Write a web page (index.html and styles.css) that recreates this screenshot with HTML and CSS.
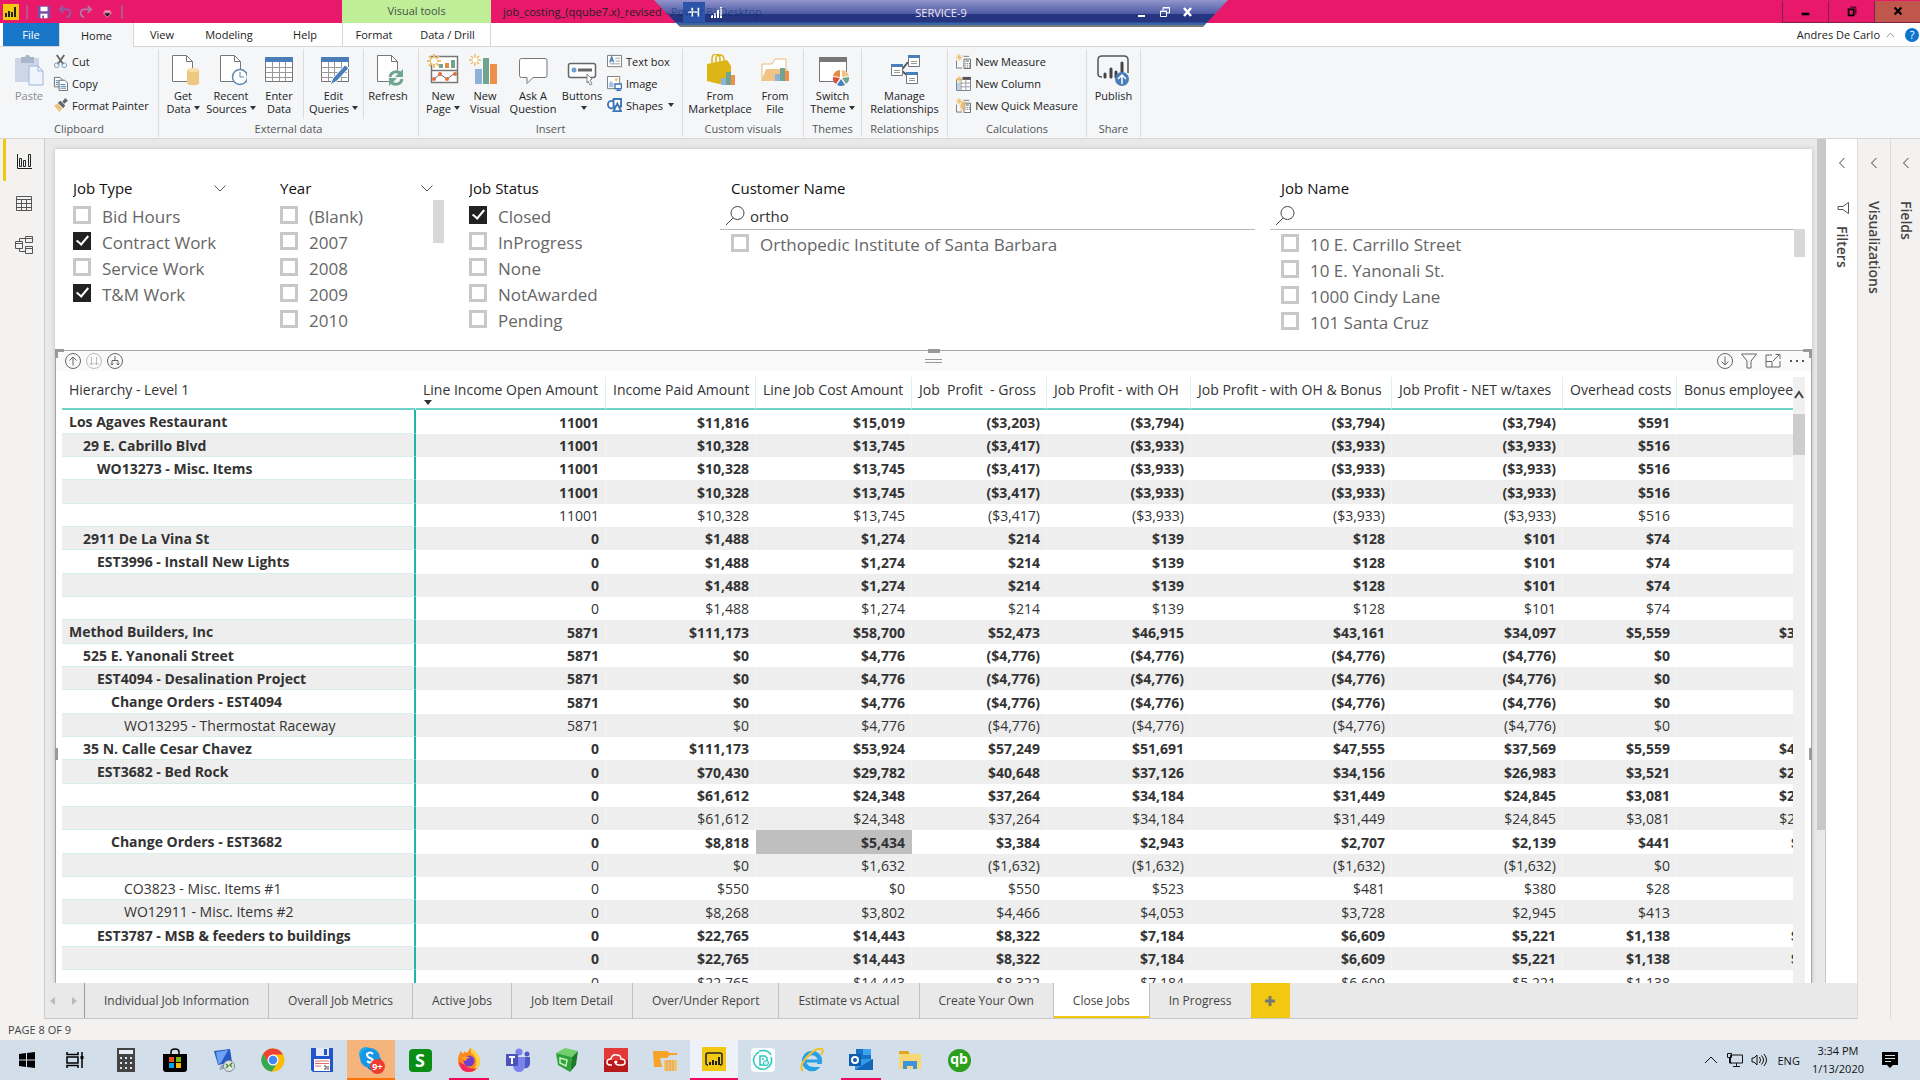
FILE: index.html
```html
<!DOCTYPE html>
<html lang="en">
<head>
<meta charset="utf-8">
<title>job_costing_(qqube7.x)_revised - Power BI Desktop</title>
<link rel="stylesheet" href="styles.css">
</head>
<body>
<div class="app">

<header class="titlebar">
  <svg class="logo" viewBox="0 0 16 16"><rect width="16" height="16" fill="#f2c811"/><path d="M3 9v4M6 7v6M9 8v5M12 3v10" stroke="#222" stroke-width="2"/></svg>
  <span class="divider"></span>
  <button class="quick" aria-label="Save"><svg viewBox="0 0 16 16"><path d="M1 1h14v14H1z" fill="#7d4ea8"/><path d="M4 2h8v5H4zM4 10h8v5H4z" fill="#fff"/><path d="M6 12h2v3H6z" fill="#7d4ea8"/></svg></button>
  <button class="quick" aria-label="Undo"><svg viewBox="0 0 16 16" fill="none" stroke="#8a62a8" stroke-width="2"><path d="M6 1 2 5l4 4M2 5h8c6 0 5 8 0 9"/></svg></button>
  <button class="quick" aria-label="Redo"><svg viewBox="0 0 16 16" fill="none" stroke="#b07aa6" stroke-width="2"><path d="m10 1 4 4-4 4M14 5H6c-6 0-5 8 0 9"/></svg></button>
  <button class="quick" aria-label="Customize"><svg viewBox="0 0 16 16"><path d="M5 7h7" stroke="#fff"/><path d="M4 9h9l-4.500 5z" fill="#111" stroke="#fff" stroke-width=".7"/></svg></button>
  <span class="divider"></span>
  <span class="context">Visual tools</span>
  <h1 class="filename">job_costing_(qqube7.x)_revised <span>- Power BI Desktop</span></h1>
  <div class="window-buttons">
    <button aria-label="Minimize"><svg viewBox="0 0 14 14"><path d="M2 9h9v3H2z"/></svg></button>
    <button aria-label="Restore"><svg viewBox="0 0 14 14" fill="none" stroke="#000"><path d="M3 5h6v7H3z" stroke-width="2"/><path d="M5 2.500h6.500V11"/></svg></button>
    <button class="close" aria-label="Close"><svg viewBox="0 0 14 14" stroke="#000" stroke-width="2.500"><path d="m3 3 8 8M11 3l-8 8"/></svg></button>
  </div>
  <div class="remote">
    <span class="pin"><svg viewBox="0 0 16 16" stroke="#fff" fill="none" stroke-width="2"><path d="M1 8h5M6 3v10M6 8h7M13 3v10"/></svg></span>
    <svg class="signal" viewBox="0 0 14 14" fill="#fff"><path d="M1 10h2v3H1zM4 8h2v5H4zM7 5h2v8H7zM10 2h2v11h-2z"/></svg>
    <span class="host">SERVICE-9</span>
    <svg class="remote-icon" viewBox="0 0 12 12"><path d="M2 9h7v2H2z" fill="#fff"/></svg>
    <svg class="remote-icon" viewBox="0 0 12 12" fill="none" stroke="#fff"><path d="M1.500 5h6v5.500h-6zM1 5.500h7M4 4V1.500h6.500V7H8M4 2h7"/></svg>
    <svg class="remote-icon" viewBox="0 0 12 12" stroke="#fff" stroke-width="2.500"><path d="m2 2 7 8M9 2l-7 8"/></svg>
  </div>
</header>

<nav class="menu">
  <button class="file">File</button>
  <button class="m-home active">Home</button>
  <button class="m-view">View</button>
  <button class="m-model">Modeling</button>
  <button class="m-help">Help</button>
  <div class="context-tabs"><button>Format</button><button>Data / Drill</button></div>
  <div class="account"><span>Andres De Carlo</span>
    <svg width="9" height="6" viewBox="0 0 9 6" fill="none" stroke="#999"><path d="m1 5 3.500-4L8 5"/></svg>
    <button class="help" aria-label="Help">?</button></div>
</nav>

<section class="ribbon">
  <div class="group g-clip"><div class="tools">
    <button class="big b-paste dim"><svg viewBox="0 0 32 32"><path d="M2 4h24v24H2z" fill="#cdd6e6"/><path d="M8 3h4l1-2h3l1 2h4v6H8z" fill="#a9b5c9"/><path d="M16 12h9l5 5v14H16z" fill="#eef4fb" stroke="#9fb4d3"/><path d="M25 12v5h5" fill="none" stroke="#9fb4d3"/></svg><span>Paste</span></button>
    <div class="stack">
      <button><svg viewBox="0 0 16 16" fill="none"><path d="m4 1 7 10M12 1 5 11" stroke="#666" stroke-width="2"/><circle cx="4" cy="12" r="2.500" stroke="#7097c4"/><circle cx="12" cy="12" r="2.500" stroke="#7097c4"/></svg>Cut</button>
      <button><svg viewBox="0 0 16 16" fill="#fff" stroke="#666"><path d="M1.500 1.500h6l2 2v8h-8z"/><path d="M6.500 4.500h6l3 3v8h-9z"/><path d="M3 5h3M3 7h3M3 9h3M8 9h5M8 11h6M8 13h6" stroke="#4a7ebb"/></svg>Copy</button>
      <button><svg viewBox="0 0 16 16"><path d="m1 8 4-2 5 5-3 4z" fill="#ecc27a"/><path d="m5 5 3-2 5 5-2 3zM10 4l3-4 3 3-4 3z" fill="#666"/></svg>Format Painter</button>
    </div>
  </div><h2>Clipboard</h2></div>

  <div class="group g-ext"><div class="tools">
    <button class="big b-a"><svg viewBox="0 0 32 32"><path d="M5.500 1.500h14l6 6v20h-20z" fill="#fff" stroke="#777"/><path d="M19.500 1.500v6h6" fill="none" stroke="#777"/><path d="M20 16v13c0 3 12 3 12 0V16z" fill="#eec781"/><ellipse cx="26" cy="16" rx="6" ry="2" fill="#f7dda8"/></svg><span>Get</span><span>Data<i></i></span></button>
    <button class="big b-a"><svg viewBox="0 0 32 32"><path d="M5.500 1.500h14l6 6v20h-20z" fill="#fff" stroke="#777"/><path d="M19.500 1.500v6h6" fill="none" stroke="#777"/><circle cx="25" cy="23" r="7.500" fill="#fff" stroke="#5b87b8" stroke-width="1.500"/><path d="M25 18v5h4" fill="none" stroke="#5b87b8"/></svg><span>Recent</span><span>Sources<i></i></span></button>
    <button class="big b-a"><svg viewBox="0 0 32 32"><path d="M2.500 3.500h27v24h-27z" fill="#fff" stroke="#777"/><path d="M2 3h28v5H2z" fill="#4a7ebb"/><path d="M3 13.500h26M3 18.500h26M3 23.500h26M9.500 8v19M16.500 8v19M22.500 8v19" stroke="#999"/></svg><span>Enter</span><span>Data</span></button>
    <button class="big b-edit lined"><svg viewBox="0 0 32 32"><path d="M3.500 3.500h27v24h-27z" fill="#fff" stroke="#777"/><path d="M3 3h28v5H3z" fill="#4a7ebb"/><path d="M3 13.500h26M3 18.500h26M3 23.500h26M10.500 8v19M16.500 8v19M23.500 8v19" stroke="#999"/><path d="m12 31 3-7L27 11l4 3-12 13z" fill="#4a7ebb" stroke="#fff"/></svg><span>Edit</span><span>Queries<i></i></span></button>
    <button class="big b-a"><svg viewBox="0 0 32 32"><path d="M5.500 1.500h14l6 6v20h-20z" fill="#fff" stroke="#777"/><path d="M19.500 1.500v6h6" fill="none" stroke="#777"/><circle cx="24" cy="24" r="8" fill="#f4f6f8"/><path d="M18 23c1-6 9-7 11-2M30 25c-1 6-9 7-11 2" fill="none" stroke="#6fa58f" stroke-width="3"/><path d="M31 15v8h-8zM17 32v-8h8z" fill="#6fa58f"/></svg><span>Refresh</span></button>
  </div><h2>External data</h2></div>

  <div class="group g-insert"><div class="tools">
    <button class="big b-c"><svg viewBox="0 0 32 32"><path d="M4.500 2.500h26v26h-26zM4 16.500h26" fill="#fff" stroke="#777" stroke-width="1.500"/><path d="M12 10h4v4h-4zM24 6h4v8h-4z" fill="#6fa58f"/><path d="M18 9h4v5h-4z" fill="#e58a43"/><path d="m7 25 6-5 7 5 8-6" fill="none" stroke="#666"/><g fill="#e0703c"><circle cx="7" cy="25" r="2"/><circle cx="13" cy="20" r="2"/><circle cx="20" cy="25" r="2"/><circle cx="28" cy="20" r="2"/></g><path d="M7 0v14M0 7h14M2 2l10 10M12 2 2 12" stroke="#efbd6b" stroke-width="2"/><circle cx="7" cy="7" r="3" fill="#fff"/></svg><span>New</span><span>Page<i></i></span></button>
    <button class="big b-c"><svg viewBox="0 0 32 32"><path d="M6 15h7v15H6z" fill="#8fb0d9"/><path d="M14 4h6v26h-6z" fill="#6fa58f"/><path d="M21 10h7v20h-7z" fill="#ee8f4b"/><path d="M6 0v12M0 6h12M2 2l8 8M10 2l-8 8" stroke="#efbd6b" stroke-width="1.500"/><circle cx="6" cy="6" r="2.500" fill="#fff"/></svg><span>New</span><span>Visual</span></button>
    <button class="big b-ask"><svg viewBox="0 0 32 32"><path d="M5 4.500h23q2 0 2 2v15q0 2-2 2H16l-6 6v-6H4.500q-2 0-2-2v-15q0-2 2-2z" fill="#fff" stroke="#777"/></svg><span>Ask A</span><span>Question</span></button>
    <button class="big b-btn"><svg viewBox="0 0 32 32"><rect x="2.500" y="9.500" width="27" height="14" rx="2" fill="#fff" stroke="#666" stroke-width="1.500"/><circle cx="8" cy="16" r="2.500" fill="#6fa0d4"/><path d="M12 16h14" stroke="#666" stroke-width="3"/><path d="m21 20 5 5-2 1 2 4-2 1-2-4-1 2z" fill="#fff" stroke="#888"/></svg><span>Buttons</span><span><i></i></span></button>
    <div class="stack">
      <button><svg viewBox="0 0 16 16"><path d="M.5 1.500h15v12H.5z" fill="#fff" stroke="#777"/><path d="m3 9 2-6 2 6M3.500 7h3" fill="none" stroke="#4a7ebb" stroke-width="1.500"/><path d="M9 4.500h5M9 7.500h5M3 10.500h11" stroke="#999"/></svg>Text box</button>
      <button><svg viewBox="0 0 16 16"><path d="M.5.5h13v13H.5z" fill="#fff" stroke="#777"/><circle cx="10" cy="4" r="1.500" fill="#eebf72"/><path d="M2 12V8l2-3 3 3v4z" fill="#a7c2e2"/><path d="M8.500 8.500h7v5h-7zM12 13v2M10 15.500h5" fill="#fff" stroke="#3d75b5" stroke-width="1.500"/></svg>Image</button>
      <button><svg viewBox="0 0 16 16" fill="#fff" stroke="#3d75b5" stroke-width="2"><circle cx="5" cy="7" r="4"/><path d="M7 1h8v8H7z"/><path d="m11 6 4 8H7z"/></svg>Shapes<i></i></button>
    </div>
  </div><h2>Insert</h2></div>

  <div class="group g-custom"><div class="tools">
    <button class="big b-market"><svg viewBox="0 0 32 32"><path d="M8 9V5q0-5 4-5t4 5v3M12 9V4q0-3 4-3t4 5v2" fill="none" stroke="#dcb414" stroke-width="1.500"/><path d="m3 10 20-4 4 6v17l-12 1-12-3z" fill="#dcb414"/><path d="M17 24h5v7h-5z" fill="#8fb0d9"/><path d="M22 18h5v13h-5z" fill="#6fa58f"/><path d="M27 21h4v10h-4z" fill="#ee8f4b"/></svg><span>From</span><span>Marketplace</span></button>
    <button class="big b-c"><svg viewBox="0 0 32 32"><path d="M3 26V10h10l3-5h11v12z" fill="#fff" stroke="#e8bd80"/><path d="m2 27 5-12h22l-6 12z" fill="#efc487"/><path d="M16 20h5v7h-5z" fill="#8fb0d9"/><path d="M21 14h5v13h-5z" fill="#6fa58f"/><path d="M26 17h4v10h-4z" fill="#ee8f4b"/></svg><span>From</span><span>File</span></button>
  </div><h2>Custom visuals</h2></div>

  <div class="group g-theme"><div class="tools">
    <button class="big"><svg viewBox="0 0 32 32"><path d="M2.500 3.500h27v24h-27z" fill="#fff" stroke="#777"/><path d="M2 3h28v5H2z" fill="#777"/><circle cx="24" cy="24" r="8" fill="#fff"/><path d="M23 23V16a8 8 0 0 0-7 6z" fill="#e58a43"/><path d="M25 23V16a8 8 0 0 1 7 6z" fill="#efc487"/><path d="m25 24 7-1q1 4-3 7z" fill="#6fa58f"/><path d="m24 25 4 6q-4 2-8 0z" fill="#4a7ebb"/><path d="m23 24-4 6q-4-3-3-7z" fill="#d3513f"/></svg><span>Switch</span><span>Theme<i></i></span></button>
  </div><h2>Themes</h2></div>

  <div class="group g-rel"><div class="tools">
    <button class="big"><svg viewBox="0 0 32 32"><path d="m11 18 8-10M13 17l6 5" stroke="#555" stroke-width="2"/><path d="M19.500 1.500h11v11h-11zM2.500 10.500h11v11h-11zM17.500 18.500h11v11h-11z" fill="#fff" stroke="#777"/><path d="M19 1h12v3H19zM2 10h12v3H2zM17 18h12v3H17z" fill="#4a7ebb"/><path d="M22 7.500h6M22 9.500h6M5 16.500h6M5 18.500h6M20 24.500h6M20 26.500h6" stroke="#999"/></svg><span>Manage</span><span>Relationships</span></button>
  </div><h2>Relationships</h2></div>

  <div class="group g-calc"><div class="tools">
    <div class="stack">
      <button><svg viewBox="0 0 16 16"><path d="M.5 7v8h6M8 2.500h6" fill="none" stroke="#777"/><path d="M8.500 5.500h7v10h-7z" fill="#fff" stroke="#666"/><path d="M10 7.500h4M10 10h1m1 0h1m1 0h1M10 12h1m1 0h1m1 0h1M10 14h1m1 0h1m1 0h1" stroke="#555"/><path d="M3.500 0v7M0 3.500h7M1 1l5 5M6 1 1 6" stroke="#efbd6b"/></svg>New Measure</button>
      <button><svg viewBox="0 0 16 16"><path d="M.5 3.500h15v12H.5z" fill="#fff" stroke="#777"/><path d="M1 7h4v8H1z" fill="#b8d0ea"/><path d="M7 1h9v3H7z" fill="#555"/><path d="M5.500 4v11M10.500 4v11M5 7.500h10M5 11.500h10" stroke="#999"/><path d="M3.500 0v7M0 3.500h7M1 1l5 5M6 1 1 6" stroke="#efbd6b"/></svg>New Column</button>
      <button><svg viewBox="0 0 16 16"><path d="M.5 7v8h6M8 2.500h6" fill="none" stroke="#777"/><path d="M8.500 5.500h7v10h-7z" fill="#fff" stroke="#666"/><path d="M10 7.500h4M10 10h1m1 0h1m1 0h1M10 12h1m1 0h1m1 0h1" stroke="#555"/><path d="M3.500 0v7M0 3.500h7M1 1l5 5M6 1 1 6" stroke="#efbd6b"/><path d="M6 4h4L8 8h2l-6 8 2-6H4z" fill="#efbd6b"/></svg>New Quick Measure</button>
    </div>
  </div><h2>Calculations</h2></div>

  <div class="group g-share"><div class="tools">
    <button class="big"><svg viewBox="0 0 32 32"><path d="M5 23q-4 0-4-3V6q0-4 4-4h22q4 0 4 4v13" fill="none" stroke="#555" stroke-width="1.500"/><path d="M8 20v3M14 15v8M19 18v5M25 9v14" stroke="#444" stroke-width="3" stroke-linecap="round"/><circle cx="25" cy="25" r="7" fill="#4a7ebb"/><path d="m21 25 4-4 4 4M25 21v9" fill="none" stroke="#fff" stroke-width="1.500"/></svg><span>Publish</span></button>
  </div><h2>Share</h2></div>
</section>

<main class="workspace">
  <nav class="rail">
    <button class="active" aria-label="Report"><svg viewBox="0 0 18 18" fill="none" stroke="#222"><path d="M1.500 2v14.500H16M3.500 6.500h2v8h-2zM7.500 8.500h2v6h-2zM12.500 2.500h2v12h-2z"/></svg></button>
    <button aria-label="Data"><svg viewBox="0 0 18 18" fill="none" stroke="#555"><path d="M1.500 2.500h15v14h-15zM1 5.500h15M1 9.500h15M1 13.500h15M6.500 5v11M11.500 5v11" /></svg></button>
    <button aria-label="Model"><svg viewBox="0 0 18 18" fill="none" stroke="#555"><path d="M.5 5.500h7v7h-7zM.5 7.500h7M10.500.5h7v6h-7zM10.500 2.500h7M10.500 10.500h7v7h-7zM10.500 12.500h7M4.500 5V2.500h6M4.500 13v2.500h6"/></svg></button>
  </nav>

  <div class="center">
    <div class="stage">
      <div class="canvas">
        <div class="page">
          <div class="slicers">
            <section class="slicer">
              <h3>Job Type <svg viewBox="0 0 12 7"><path d="m.5.5 5.500 5.500L11.500.5"/></svg></h3>
              <label><input type="checkbox">Bid Hours</label>
              <label><input type="checkbox" checked>Contract Work</label>
              <label><input type="checkbox">Service Work</label>
              <label><input type="checkbox" checked>T&amp;M Work</label>
            </section>
            <section class="slicer year">
              <h3>Year <svg viewBox="0 0 12 7"><path d="m.5.5 5.500 5.500L11.500.5"/></svg></h3>
              <label><input type="checkbox">(Blank)</label>
              <label><input type="checkbox">2007</label>
              <label><input type="checkbox">2008</label>
              <label><input type="checkbox">2009</label>
              <label><input type="checkbox">2010</label>
              <span class="thumb"></span>
            </section>
            <section class="slicer">
              <h3>Job Status</h3>
              <label><input type="checkbox" checked>Closed</label>
              <label><input type="checkbox">InProgress</label>
              <label><input type="checkbox">None</label>
              <label><input type="checkbox">NotAwarded</label>
              <label><input type="checkbox">Pending</label>
            </section>
            <section class="slicer customer">
              <h3>Customer Name</h3>
              <div class="search"><svg viewBox="0 0 20 20"><circle cx="12.500" cy="7" r="6.500"/><path d="m8 12-7 7"/></svg><input type="text" value="ortho" aria-label="Search customers"></div>
              <label><input type="checkbox">Orthopedic Institute of Santa Barbara</label>
            </section>
            <section class="slicer jobname">
              <h3>Job Name</h3>
              <div class="search"><svg viewBox="0 0 20 20"><circle cx="12.500" cy="7" r="6.500"/><path d="m8 12-7 7"/></svg><input type="text" aria-label="Search jobs"></div>
              <label><input type="checkbox">10 E. Carrillo Street</label>
              <label><input type="checkbox">10 E. Yanonali St.</label>
              <label><input type="checkbox">1000 Cindy Lane</label>
              <label><input type="checkbox">101 Santa Cruz</label>
              <span class="thumb"></span>
            </section>
          </div>

          <section class="visual">
            <span class="handle h-tl"></span><span class="handle h-top"></span><span class="handle h-tr"></span><span class="handle h-l"></span><span class="handle h-r"></span>
            <div class="visual-bar">
              <svg viewBox="0 0 18 18"><circle cx="9" cy="9" r="7.500"/><path d="M9 13.500V5M5.500 8.500 9 5l3.500 3.500"/></svg>
              <svg class="faint" viewBox="0 0 18 18"><circle cx="9" cy="9" r="7.500"/><path d="M6.500 5v8M4.500 11l2 2 2-2M11.500 5v8M9.500 11l2 2 2-2"/></svg>
              <svg viewBox="0 0 18 18"><circle cx="9" cy="9" r="7.500"/><path d="M9 4v4M6 13V8.500h6V13M4.500 11.500 6 13l1.500-1.500M10.500 11.500 12 13l1.500-1.500"/></svg>
              <span class="grip"></span>
              <svg viewBox="0 0 18 18"><circle cx="9" cy="9" r="7.500"/><path d="M9 4.500V13M5.500 9.500 9 13l3.500-3.500"/></svg>
              <svg viewBox="0 0 18 18"><path d="M1.500 2h15L11 9v7H7V9z"/></svg>
              <svg viewBox="0 0 18 18"><path d="M8 3H2v12h14V9M2 9.500h6V15M9 9l6-6M11.500 2.500H16V7"/></svg>
              <svg class="dots" viewBox="0 0 18 18"><path d="M2 8h2v2H2zM8 8h2v2H8zM14 8h2v2h-2z"/></svg>
            </div>
            <div class="matrix">
              <div class="clip">
              <table>
                <colgroup><col class="c0"><col class="c1"><col class="c2"><col class="c3"><col class="c4"><col class="c5"><col class="c6"><col class="c7"><col class="c8"><col class="c9"></colgroup>
                <thead><tr><th>Hierarchy - Level 1<th class="sorted">Line Income Open Amount<th>Income Paid Amount<th>Line Job Cost Amount<th>Job&nbsp; Profit&nbsp; - Gross<th>Job Profit - with OH<th>Job Profit - with OH &amp; Bonus<th>Job Profit - NET w/taxes<th>Overhead costs<th>Bonus employee</tr></thead>
                <tbody>
                <tr class="b"><th>Los Agaves Restaurant<td>11001<td>$11,816<td>$15,019<td>($3,203)<td>($3,794)<td>($3,794)<td>($3,794)<td>$591<td>
                <tr class="b l1"><th>29 E. Cabrillo Blvd<td>11001<td>$10,328<td>$13,745<td>($3,417)<td>($3,933)<td>($3,933)<td>($3,933)<td>$516<td>
                <tr class="b l2"><th>WO13273 - Misc. Items<td>11001<td>$10,328<td>$13,745<td>($3,417)<td>($3,933)<td>($3,933)<td>($3,933)<td>$516<td>
                <tr class="b"><th><td>11001<td>$10,328<td>$13,745<td>($3,417)<td>($3,933)<td>($3,933)<td>($3,933)<td>$516<td>
                <tr><th><td>11001<td>$10,328<td>$13,745<td>($3,417)<td>($3,933)<td>($3,933)<td>($3,933)<td>$516<td>
                <tr class="b l1"><th>2911 De La Vina St<td>0<td>$1,488<td>$1,274<td>$214<td>$139<td>$128<td>$101<td>$74<td>
                <tr class="b l2"><th>EST3996 - Install New Lights<td>0<td>$1,488<td>$1,274<td>$214<td>$139<td>$128<td>$101<td>$74<td>
                <tr class="b"><th><td>0<td>$1,488<td>$1,274<td>$214<td>$139<td>$128<td>$101<td>$74<td>
                <tr><th><td>0<td>$1,488<td>$1,274<td>$214<td>$139<td>$128<td>$101<td>$74<td>
                <tr class="b"><th>Method Builders, Inc<td>5871<td>$111,173<td>$58,700<td>$52,473<td>$46,915<td>$43,161<td>$34,097<td>$5,559<td>$3,754
                <tr class="b l1"><th>525 E. Yanonali Street<td>5871<td>$0<td>$4,776<td>($4,776)<td>($4,776)<td>($4,776)<td>($4,776)<td>$0<td>
                <tr class="b l2"><th>EST4094 - Desalination Project<td>5871<td>$0<td>$4,776<td>($4,776)<td>($4,776)<td>($4,776)<td>($4,776)<td>$0<td>
                <tr class="b l3"><th>Change Orders - EST4094<td>5871<td>$0<td>$4,776<td>($4,776)<td>($4,776)<td>($4,776)<td>($4,776)<td>$0<td>
                <tr class="l4"><th>WO13295 - Thermostat Raceway<td>5871<td>$0<td>$4,776<td>($4,776)<td>($4,776)<td>($4,776)<td>($4,776)<td>$0<td>
                <tr class="b l1"><th>35 N. Calle Cesar Chavez<td>0<td>$111,173<td>$53,924<td>$57,249<td>$51,691<td>$47,555<td>$37,569<td>$5,559<td>$4,136
                <tr class="b l2"><th>EST3682 - Bed Rock<td>0<td>$70,430<td>$29,782<td>$40,648<td>$37,126<td>$34,156<td>$26,983<td>$3,521<td>$2,970
                <tr class="b"><th><td>0<td>$61,612<td>$24,348<td>$37,264<td>$34,184<td>$31,449<td>$24,845<td>$3,081<td>$2,735
                <tr><th><td>0<td>$61,612<td>$24,348<td>$37,264<td>$34,184<td>$31,449<td>$24,845<td>$3,081<td>$2,735
                <tr class="b l3"><th>Change Orders - EST3682<td>0<td>$8,818<td class="picked">$5,434<td>$3,384<td>$2,943<td>$2,707<td>$2,139<td>$441<td>$236
                <tr><th><td>0<td>$0<td>$1,632<td>($1,632)<td>($1,632)<td>($1,632)<td>($1,632)<td>$0<td>
                <tr class="l4"><th>CO3823 - Misc. Items #1<td>0<td>$550<td>$0<td>$550<td>$523<td>$481<td>$380<td>$28<td>
                <tr class="l4"><th>WO12911 - Misc. Items #2<td>0<td>$8,268<td>$3,802<td>$4,466<td>$4,053<td>$3,728<td>$2,945<td>$413<td>
                <tr class="b l2"><th>EST3787 - MSB &amp; feeders to buildings<td>0<td>$22,765<td>$14,443<td>$8,322<td>$7,184<td>$6,609<td>$5,221<td>$1,138<td>$575
                <tr class="b"><th><td>0<td>$22,765<td>$14,443<td>$8,322<td>$7,184<td>$6,609<td>$5,221<td>$1,138<td>$575
                <tr><th><td>0<td>$22,765<td>$14,443<td>$8,322<td>$7,184<td>$6,609<td>$5,221<td>$1,138<td>
                </tbody>
              </table>
              </div>
              <div class="scroll"><svg viewBox="0 0 12 12"><path d="m2 9 4-6 4 6"/></svg><span></span></div>
            </div>
          </section>
        </div>
        <div class="gutter"><span></span></div>
      </div>
      <aside class="pane filters">
        <button aria-label="Expand filters"><svg viewBox="0 0 8 12"><path d="M6.500 1 1.500 6l5 5"/></svg></button>
        <svg class="funnel" viewBox="0 0 12 12"><path d="M11.500.5v11L6 7.500H1v-3h5z"/></svg>
        <h2>Filters</h2>
      </aside>
    </div>
    <nav class="pages">
      <span class="arrows"><svg viewBox="0 0 6 8"><path d="M5 0v8L0 4z"/></svg><svg viewBox="0 0 6 8"><path d="M1 0v8l5-4z"/></svg></span>
      <button>Individual Job Information</button>
      <button>Overall Job Metrics</button>
      <button>Active Jobs</button>
      <button>Job Item Detail</button>
      <button>Over/Under Report</button>
      <button>Estimate vs Actual</button>
      <button>Create Your Own</button>
      <button class="active">Close Jobs</button>
      <button>In Progress</button>
      <button class="add" aria-label="New page"><svg viewBox="0 0 12 12"><path d="M6 1v10M1 6h10" stroke="#777" stroke-width="3"/></svg></button>
    </nav>
  </div>

  <aside class="pane">
    <button aria-label="Expand visualizations"><svg viewBox="0 0 8 12"><path d="M6.500 1 1.500 6l5 5"/></svg></button>
    <h2>Visualizations</h2>
  </aside>
  <aside class="pane fields">
    <button aria-label="Expand fields"><svg viewBox="0 0 8 12"><path d="M6.500 1 1.500 6l5 5"/></svg></button>
    <h2>Fields</h2>
  </aside>
</main>

<div class="status">PAGE 8 OF 9</div>

<footer class="taskbar">
  <div class="start">
    <button aria-label="Start"><svg viewBox="0 0 24 24"><path d="m4 6 7-1v6.500H4zM12 5l8-1v7.500h-8zM4 12.500h7V19l-7-1zM12 12.500h8V20l-8-1z"/></svg></button>
    <button aria-label="Task view"><svg viewBox="0 0 24 24" fill="none" stroke="#000" stroke-width="1.500"><path d="M4 4v2.500h11V4M4 9h11v6H4zM4 20v-2.500h11V20M19 4v16"/><path d="M17.500 8h3v3h-3z" fill="#000" stroke="none"/></svg></button>
  </div>
  <div class="apps">
    <button aria-label="Calculator"><svg viewBox="0 0 24 24"><path d="M3 0h18v24H3z" fill="#444"/><path d="M5 2h14v4H5z" fill="#e8eef5"/><path d="M6 9h2v2H6zm5 0h2v2h-2zm5 0h2v2h-2zM6 14h2v2H6zm5 0h2v2h-2zm5 0h2v2h-2zM6 19h2v2H6zm5 0h2v2h-2zm5 0h2v2h-2z" fill="#dfe5ee"/></svg></button>
    <button aria-label="Store"><svg viewBox="0 0 24 24"><path d="M8 7V4q0-3 4-3t4 3v3" fill="none" stroke="#000" stroke-width="1.500"/><path d="M0 6h24v15q0 3-3 3H3q-3 0-3-3z"/><path d="M6 9h5v5H6z" fill="#f25022"/><path d="M13 9h5v5h-5z" fill="#7fba00"/><path d="M6 15h5v5H6z" fill="#00a4ef"/><path d="M13 15h5v5h-5z" fill="#ffb900"/></svg></button>
    <button aria-label="Remote desktop"><svg viewBox="0 0 24 24"><path d="m2 3 16-2 2 13-14 3z" fill="#2458c4"/><path d="m4 4 12-2-7 13-3 1z" fill="#6ea1f1"/><path d="m9 17 5-1 2 4-9 2z" fill="#99a4b4"/><circle cx="17" cy="18" r="5.500" fill="#dfe6df" stroke="#889"/><path d="m14 16 2 2-2 2M20 15l-2 2 2 2" fill="none" stroke="#438b3a" stroke-width="1.500"/></svg></button>
    <button aria-label="Chrome"><svg viewBox="0 0 24 24"><circle cx="12" cy="12" r="11.500" fill="#fbbc05"/><path d="M2 6A11.500 11.500 0 0 1 22 6.500H12L7 14z" fill="#ea4335"/><path d="M2 6a11.500 11.500 0 0 0 9 17.500L16 15l-9-1z" fill="#34a853"/><circle cx="12" cy="12" r="5.500" fill="#fff"/><circle cx="12" cy="12" r="4.300" fill="#4285f4"/></svg></button>
    <button aria-label="Backup"><svg viewBox="0 0 24 24"><path d="M1 0h22v24H3l-2-2z" fill="#2354c9"/><path d="M6 0h13v8H6z" fill="#e5ebf5"/><path d="M14 1h3v6h-3z" fill="#2354c9"/><path d="M4 11h16v12H4z" fill="#fff"/><path d="M5 13h14M5 15.500h14M5 18h6" stroke="#e06a6a"/><path d="M14 18h2v3h-2m4-3v4" fill="none" stroke="#444"/></svg></button>
    <button class="skype" aria-label="Skype"><svg viewBox="0 0 24 24"><circle cx="7" cy="7" r="7" fill="#1caaf0"/><circle cx="15" cy="16" r="8" fill="#0a83da"/><circle cx="11" cy="11" r="10" fill="#1496e6"/><path d="M14 7q-3-3-6 0 0 3 3 4t3 3q-3 3-6 0" fill="none" stroke="#fff" stroke-width="2"/></svg><b>9+</b></button>
    <button aria-label="S application"><span class="tile green">S</span></button>
    <button class="running" aria-label="Firefox"><svg viewBox="0 0 24 24"><path d="M13 0q10 6 10 13a11 11 0 0 1-22 0Q1 7 4 3l2 3 2-3 1 2q3-1 4-5z" fill="#ff8a1c"/><path d="M14 0q10 7 9 14-2 10-11 10 9-4 7-12-1-5-5-7z" fill="#ffd23e"/><path d="M2 14q1 10 10 10 5 0 8-4-8 2-12-3z" fill="#f0285c"/><circle cx="12" cy="13" r="5.500" fill="#7040c8"/><path d="M5 9q5-2 8 1-4 0-4 3-3 0-4-4z" fill="#ff9c2a"/></svg></button>
    <button aria-label="Teams"><svg viewBox="0 0 24 24"><circle cx="13" cy="4" r="3.500" fill="#7b83eb"/><circle cx="21" cy="6" r="2.500" fill="#5059c9"/><path d="M16 9h8v7q-1 5-6 4z" fill="#5059c9"/><path d="M8 9h11v9q-1 6-6 6t-6-6z" fill="#7b83eb"/><path d="M0 6h12v12H0z" fill="#4b53bc"/><path d="M3 9h6M6 9v7" stroke="#fff" stroke-width="2"/></svg></button>
    <button aria-label="Desktop cube"><svg viewBox="0 0 24 24"><path d="m1 5 9-5 13 3-6 6z" fill="#6fd06b"/><path d="m1 5 16 4-2 15L3 17z" fill="#2fa33a"/><path d="m17 9 6-6-2 14-6 7z" fill="#1c7a2a"/><path d="m5 10 7 2-1 6-6-3z" fill="none" stroke="#c8f0c2" stroke-width="1.500"/></svg></button>
    <button aria-label="Cloud"><svg viewBox="0 0 24 24"><path d="M0 0h24v24H0z" fill="#b81a1c"/><path d="M0 0h24v12H0z" fill="#e23a3a"/><path d="M8 17H6q-3 0-3-3t4-3q1-5 6-4 4 0 4 4 4 0 4 3t-3 3h-3q-4 0-4-4" fill="none" stroke="#fff" stroke-width="1.500"/><circle cx="12" cy="14" r="1.500" fill="#fff"/></svg></button>
    <button aria-label="Drill"><svg viewBox="0 0 24 24"><path d="M0 3h14l3 2h7v2h-7l-3 3H7l2 9H1z" fill="#f7a32a"/><path d="M11 12h13v11H11z" fill="#f3c375"/><path d="M14 12v11M17 12v11M20 12v11" stroke="#df9f46"/></svg></button>
    <button class="current" aria-label="Power BI"><svg viewBox="0 0 24 24"><path d="M0 0h24v24H0z" fill="#f2c811"/><path d="M6 18q-2 0-2-2V8q0-2 2-2h12q2 0 2 2v8q0 2-2 2" fill="none" stroke="#222" stroke-width="1.500"/><path d="M8 15v3M11 13v5M14 14v4M17 10v8" stroke="#222" stroke-width="2"/></svg></button>
    <button aria-label="Sync"><svg viewBox="0 0 24 24"><rect width="24" height="24" rx="4" fill="#fafdfd"/><path d="M8 4a9 9 0 1 0 12 5M8 3q9-2 12 4M9 8h5l2 2v7H9zM11 11h2" fill="none" stroke="#2cc5bd" stroke-width="1.500"/><circle cx="15" cy="15" r="2.500" fill="#cdf3f0" stroke="#2cc5bd"/></svg></button>
    <button aria-label="Internet Explorer"><svg viewBox="0 0 24 24"><circle cx="12" cy="13" r="8" fill="none" stroke="#2aa0e4" stroke-width="4.500"/><path d="M6 13h15" stroke="#2aa0e4" stroke-width="3"/><path d="M13 16h10v3H13z" fill="#d2dfeb"/><path d="M3 23q-5-4 4-14T22 1q2 2-1 6" fill="none" stroke="#f0c22a" stroke-width="2"/></svg></button>
    <button class="running more" aria-label="Outlook"><svg viewBox="0 0 24 24"><path d="M7 1h15v13H7z" fill="#1a72c8"/><path d="M14 1h8v6h-8z" fill="#3ba4ed"/><path d="M6 11h18v11H6z" fill="#2f9be8"/><path d="m6 22 18-11v11z" fill="#1565b8"/><path d="M0 6h12v12H0z" fill="#0f5ca8"/><circle cx="6" cy="12" r="3" fill="none" stroke="#fff" stroke-width="2"/></svg></button>
    <button aria-label="File Explorer"><svg viewBox="0 0 24 24"><path d="M1 3h9l2 3h11v15H1z" fill="#f8d775"/><path d="M1 3h9l2 3H1z" fill="#e0a526"/><path d="M5 21v-8h14v8h-4v-3H9v3z" fill="#3f93dc"/></svg></button>
    <button aria-label="QuickBooks"><span class="tile round">qb</span></button>
  </div>
  <div class="tray">
    <svg viewBox="0 0 16 16"><path d="m2 11 6-6 6 6"/></svg>
    <svg viewBox="0 0 16 16"><path d="M3.500 3h12v8h-12zM9.500 11v3M6 14.500h7M.5 1.500h4v4h-4zM2.500 5v6h2"/></svg>
    <svg viewBox="0 0 16 16"><path d="M1 6v4h2l3 3V3L3 6zM8.500 5q2 3 0 6M10.500 3.500q4 4.500 0 9M13 2q5 6 0 12"/></svg>
    <span class="lang">ENG</span>
    <span class="clock"><span>3:34 PM</span><span>1/13/2020</span></span>
    <svg class="note" viewBox="0 0 16 16"><path d="M0 0h16v13h-5l-3 3-3-3H0z" fill="#000" stroke="none"/><path d="M3 3.500h10M3 6.500h10M3 9.500h6" stroke="#d2dfeb"/></svg>
  </div>
</footer>
</div>
</body>
</html>
```
FILE: styles.css
```css
* { box-sizing: border-box; }
body { margin: 0; font: 11px/13px "Open Sans", "Noto Sans", sans-serif; color: #222; background: #f3f2f1; }
button { font: inherit; color: inherit; background: none; border: 0; margin: 0; padding: 0; white-space: nowrap; }
h1, h2, h3 { margin: 0; font: inherit; }
svg { display: block; flex: none; }
.app { display: flex; flex-direction: column; height: 100vh; min-height: 600px; overflow: hidden; }

/* Title bar */
.titlebar { position: relative; display: flex; align-items: center; flex: none; height: 23px; background: #e8196b; padding-left: 3px; }
.logo { width: 16px; height: 16px; }
.divider { width: 2px; height: 14px; margin: 0 7px; border: 1px solid #b85586; }
.quick { width: 14px; height: 14px; margin-right: 7px; }
.divider + .quick { margin-left: 2px; }
.quick svg { width: 14px; height: 14px; }
.quick + .divider { margin: 0; }
.context { position: absolute; left: 342px; width: 149px; height: 23px; line-height: 21px; background: #c0ed98; text-align: center; color: #45534a; }
.filename { position: absolute; left: 503px; z-index: 2; }
.filename span { color: rgba(0, 45, 100, .5); }
.window-buttons { display: flex; margin-left: auto; height: 22px; }
.window-buttons button { display: grid; place-items: center; width: 46px; border: solid #7c2349; border-width: 0 0 1px 1px; }
.window-buttons .close { background: #c0574c; }
.window-buttons svg { width: 12px; height: 12px; }
.remote { position: absolute; z-index: 1; left: 654px; top: 0; width: 574px; height: 27px; padding: 0 23px 3px 29px; display: flex; align-items: center; clip-path: polygon(0 0, 100% 0, 549px 100%, 26px 100%); background: linear-gradient(#9295cc 0, #4c5aa4 14px, #26357f 14px, #26357f 22px, #3564a8 23px, #3564a8 25px, #777 25px); color: #f4e4f4; }
.pin { display: grid; place-items: center; width: 22px; height: 20px; background: #2c55aa; }
.pin svg { width: 14px; height: 14px; }
.signal { width: 14px; height: 14px; margin-left: 5px; }
.host { flex: 1; text-align: center; padding-left: 22px; }
.remote-icon { width: 12px; height: 12px; margin-right: 11px; }

/* Ribbon tabs */
.menu { display: flex; flex: none; height: 24px; padding-left: 3px; background: #fff; border-bottom: 1px solid #d6d6d6; }
.menu .file { width: 56px; background: #1877c9; color: #fff; }
.menu .active { background: #f4f6f8; border: solid #d6d6d6; border-width: 0 1px; height: 24px; }
.m-home { width: 75px; }
.m-view { width: 56px; }
.m-model { width: 78px; }
.m-help { width: 74px; }
.context-tabs { display: flex; width: 149px; border: solid #d6d6d6; border-width: 0 1px; }
.context-tabs button:first-child { width: 62px; }
.context-tabs button:last-child { flex: 1; }
.account { display: flex; align-items: center; margin-left: auto; gap: 6px; padding-right: 1px; }
.help { width: 14px; height: 14px; border-radius: 50%; background: #0d74cc; color: #fff; margin-left: 4px; }

/* Ribbon */
.ribbon { display: flex; flex: none; height: 92px; padding: 2px 0 1px; background: #f4f6f8; border-bottom: 1px solid #d6d6d6; }
.group { display: flex; flex-direction: column; flex: none; border-right: 1px solid #dcdcdc; }
.group h2 { text-align: center; color: #555; line-height: 16px; margin-top: auto; }
.tools { display: flex; justify-content: center; }
.g-clip { width: 159px; } .g-ext { width: 260px; } .g-insert { width: 264px; } .g-custom { width: 121px; }
.g-theme { width: 58px; } .g-rel { width: 86px; } .g-calc { width: 139px; } .g-share { width: 54px; }
.g-clip .tools, .g-insert .tools, .g-ext .tools, .g-custom .tools { justify-content: flex-start; }
.g-insert .tools, .g-custom .tools { padding-left: 3px; }
.big { display: flex; flex-direction: column; align-items: center; padding-top: 5px; height: 70px; }
.big svg { width: 32px; height: 32px; margin-bottom: 3px; }
.b-paste { width: 48px; margin-left: 5px; }
.b-a { width: 48px; } .b-edit { width: 61px; } .b-c { width: 42px; } .b-ask { width: 54px; } .b-btn { width: 44px; }
.b-market { width: 68px; }
.lined { border: solid #dcdcdc; border-width: 0 1px; }
.dim { color: #8a8a8a; }
.ribbon i { display: inline-block; margin-left: 3px; border: 3px solid transparent; border-top: 4px solid #333; border-bottom: 0; vertical-align: 3px; }
.stack { display: flex; flex-direction: column; padding-top: 1px; }
.stack button { display: flex; align-items: center; height: 22px; gap: 4px; }
.stack svg { width: 15px; height: 15px; }
.stack i { margin-left: 1px; }
.g-insert .stack { padding-left: 3px; }

/* Workspace */
.workspace { display: flex; flex: 1; min-height: 0; }
.rail { flex: none; width: 45px; border-right: 1px solid #ccc; background: #f3f2f1; padding-left: 3px; }
.rail button { display: grid; place-items: center; width: 42px; height: 42px; padding: 2px 1px 0 0; }
.rail .active { border-left: 3px solid #f2c811; }
.rail svg { width: 18px; height: 18px; }
.center { display: flex; flex-direction: column; flex: 1; min-width: 0; }
.stage { display: flex; flex: 1; min-height: 0; }
.canvas { display: flex; flex: 1; min-width: 0; background: #e9e9e9; padding: 10px 0 0 10px; }
.page { display: flex; flex-direction: column; flex: 1; min-width: 0; background: #fff; box-shadow: 0 0 4px #bbb; }
.gutter { width: 14px; margin-top: -10px; padding-left: 5px; border-right: 1px solid #c8c8c8; }
.gutter span { display: block; height: 691px; background: #c8c8c8; }

/* Slicers */
.slicers { display: grid; grid-template-columns: 207fr 189fr 251fr 550fr 535fr; height: 201px; padding: 28px 7px 16px 18px; }
.slicer { position: relative; overflow: hidden; font-size: 17px; line-height: 26px; color: #666; }
.slicer h3 { display: flex; align-items: center; font-size: 15px; line-height: 22px; height: 26px; padding-bottom: 4px; color: #111; }
.slicer h3 svg { width: 12px; height: 7px; margin-left: auto; margin-right: 54px; fill: none; stroke: #555; }
.slicer.year h3 svg { margin-right: 36px; }
.slicer label { display: flex; align-items: center; gap: 11px; height: 26px; padding-top: 1px; white-space: nowrap; }
.slicer input[type="checkbox"] { appearance: none; width: 18px; height: 18px; margin: 0 0 3px; border: 3px solid #c8c8c8; background: #fff; position: relative; flex: none; }
.slicer input:checked { background: #212121; border-color: #212121; }
.slicer input:checked::after { content: ""; position: absolute; left: 3px; top: -2px; width: 5px; height: 10px; border: solid #fff; border-width: 0 2px 2px 0; transform: rotate(40deg); }
.slicer .thumb { position: absolute; right: 25px; top: 23px; width: 11px; height: 43px; background: #d8d8d8; }
.slicer.customer, .slicer.jobname { padding-left: 11px; }
.customer { margin-right: 15px; }
.slicer.jobname .thumb { right: 0; top: 52px; height: 28px; }
.search { display: flex; align-items: center; gap: 5px; height: 27px; margin: 0 0 1px -11px; padding-left: 5px; border-bottom: 1px solid #b8b8b8; }
.search svg { width: 20px; height: 20px; fill: none; stroke: #444; }
.search input { flex: 1; min-width: 0; border: 0; padding: 0; font: 15px/22px "Open Sans", "Noto Sans", sans-serif; color: #333; background: none; }

/* Matrix visual */
.visual { position: relative; display: flex; flex-direction: column; flex: 1; min-height: 0; border: 1px solid #a6a6a6; border-bottom: 0; }
.visual-bar { display: flex; align-items: center; gap: 3px; height: 20px; flex: none; background: #fafafa; padding: 0 5px 0 8px; }
.visual-bar svg { width: 18px; height: 18px; fill: none; stroke: #666; }
.visual-bar .faint { stroke: #bbb; }
.visual-bar .dots { fill: #555; stroke: none; margin-left: 2px; }
.visual-bar .grip + svg ~ svg { margin-left: 3px; }
.grip { height: 4px; width: 17px; border: solid #999; border-width: 1px 0; margin: 0 auto; position: absolute; left: 0; right: 0; }
.grip + svg { margin-left: auto; }
.handle { position: absolute; background: #999; }
.h-tl, .h-tr { width: 9px; height: 9px; top: -2px; left: -1px; background: none; border: solid #999; border-width: 3px 0 0 3px; }
.h-tr { left: auto; right: -1px; border-width: 3px 3px 0 0; }
.h-top { left: 50%; top: -2px; width: 12px; height: 4px; margin-left: -6px; }
.h-l, .h-r { left: -1px; top: 397px; width: 3px; height: 12px; }
.h-r { left: auto; right: -1px; }
.matrix { display: flex; flex: 1; min-height: 0; padding: 6px 6px 0 6px; }
.clip { flex: 1; min-width: 0; overflow: hidden; }
table { table-layout: fixed; border-collapse: separate; border-spacing: 0; width: 1768px; font-size: 14px; line-height: 20px; color: #333; }
.c0 { width: 354px; } .c1 { width: 190px; } .c2 { width: 150px; } .c3 { width: 156px; } .c4 { width: 135px; }
.c5 { width: 144px; } .c6 { width: 201px; } .c7 { width: 171px; } .c8 { width: 114px; } .c9 { width: 153px; }
th, td { padding: 1px 6px 0 7px; white-space: nowrap; text-align: left; font-weight: 400; }
thead th { height: 33px; padding-bottom: 7px; border-bottom: 2px solid #6fd3cc; border-right: 1px solid #d9f2f0; position: relative; }
thead th:first-child { border-right-color: transparent; }
.sorted::after { content: ""; position: absolute; left: 8px; bottom: 3px; border: 4px solid transparent; border-top: 5px solid #333; border-bottom: 0; }
tbody tr { height: 23px; }
tbody tr:nth-child(3n+1) { height: 24px; }
tbody tr:nth-child(even) { background: #eee; }
tbody td { text-align: right; border-right: 1px solid transparent; }
tbody tr:nth-child(even) td { border-right-color: #f3f3f3; }
tbody th { border-bottom: 1px solid #d4efec; border-right: 2px solid #1fb5a8; }
.b th, .b td { font-weight: 700; }
.l1 th { padding-left: 21px; } .l2 th { padding-left: 35px; } .l3 th { padding-left: 49px; } .l4 th { padding-left: 62px; }
td.picked { background: #bfbfbf; }
.scroll { width: 12px; background: #f0f0f0; padding-top: 12px; }
.scroll svg { width: 12px; height: 12px; fill: none; stroke: #444; stroke-width: 2; }
.scroll span { display: block; height: 41px; margin-top: 13px; background: #cdcdcd; }

/* Side panes */
.pane { display: flex; flex-direction: column; align-items: center; flex: none; width: 33px; border-left: 1px solid #dcdcdc; background: #f3f2f1; }
.pane.filters { width: 31px; background: #fff; border-left: 0; }
.pane.fields { width: 30px; }
.pane button { height: 48px; margin-bottom: 14px; }
.pane button svg { width: 8px; height: 12px; fill: none; stroke: #444; }
.pane h2 { writing-mode: vertical-rl; font-size: 14px; line-height: 20px; font-weight: 600; color: #444; }
.funnel { width: 12px; height: 12px; margin: 1px 0 12px 3px; fill: none; stroke: #555; }

/* Page tabs and status */
.pages { display: flex; flex: none; height: 36px; background: #e9e9e9; border-bottom: 1px solid #c8c8c8; font-size: 12px; color: #444; }
.pages button { padding: 0 19px; border-right: 1px solid #c0c0c0; }
.pages .active { background: #fff; border-bottom: 2px solid #f2c811; padding-top: 2px; }
.pages button:nth-last-child(2) { border-right: 0; }
.pages .add { display: grid; place-items: center; width: 39px; padding: 0; background: #f2c811; border: 0; }
.pages .add svg { width: 12px; height: 12px; }
.arrows { display: flex; align-items: center; justify-content: space-between; width: 40px; padding: 0 7px 0 5px; border-right: 1px solid #999; }
.arrows svg { width: 6px; height: 8px; fill: #bbb; }
.status { flex: none; height: 21px; padding-left: 8px; line-height: 22px; color: #444; }

/* Taskbar */
.taskbar { display: flex; flex: none; height: 40px; background: #d2dfeb; color: #111; padding-left: 3px; }
.taskbar button { position: relative; display: grid; place-items: center; width: 48px; height: 40px; }
.taskbar button svg { width: 24px; height: 24px; }
.start { display: flex; width: 99px; }
.apps { display: flex; gap: 1px; }
.apps .skype { background: #f4b47b; border-bottom: 2px solid #ff7300; }
.skype b { position: absolute; right: 10px; bottom: 4px; width: 15px; height: 15px; line-height: 15px; border-radius: 8px; background: #f03c30; color: #fff; font-size: 9px; }
.apps .current { background: #eef1f7; border-bottom: 2px solid #f00a5c; }
.running::after { content: ""; position: absolute; left: 4px; right: 4px; bottom: 0; height: 2px; background: #f00a5c; }
.tile { width: 23px; height: 23px; line-height: 22px; text-align: center; border-radius: 4px; background: #0a8f14; color: #fff; font-size: 18px; font-weight: 700; }
.tile.round { border-radius: 50%; background: #2ca01c; font-size: 14px; line-height: 20px; }
.tray { display: flex; align-items: center; margin-left: auto; gap: 8px; padding-right: 22px; }
.tray svg { width: 16px; height: 16px; fill: none; stroke: #111; }
.lang { margin-left: 2px; }
.clock { display: flex; flex-direction: column; align-items: center; margin: 0 10px 0 4px; }
.clock span { line-height: 18px; }
```
